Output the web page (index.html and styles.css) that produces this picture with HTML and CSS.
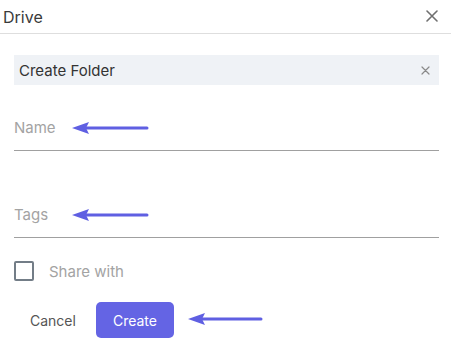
FILE: index.html
```html
<!DOCTYPE html>
<html lang="en">
<head>
  <meta charset="UTF-8" />
  <meta name="viewport" content="width=device-width, initial-scale=1.0"/>
  <title>Drive</title>
  <link rel="stylesheet" href="styles.css">
</head>
<body>
  <div class="dialog">
    <div class="header">
      <span class="title">Drive</span>
      <svg class="close" width="12" height="12" viewBox="0 0 12 12">
        <path d="M1 1L11 11M11 1L1 11" stroke="#6f6f6f" stroke-width="1.6" stroke-linecap="round"/>
      </svg>
    </div>

    <div class="content">
      <div class="chip">
        <span>Create Folder</span>
        <svg width="9" height="9" viewBox="0 0 9 9">
          <path d="M1 1L8 8M8 1L1 8" stroke="#8a8a8a" stroke-width="1.2" stroke-linecap="round"/>
        </svg>
      </div>

      <div class="field field-name">
        <span class="placeholder">Name</span>
        <svg class="arrow" width="78" height="14" viewBox="0 0 78 14">
          <path d="M12 7H75" stroke="#5f5fe2" stroke-width="3" stroke-linecap="round"/>
          <path d="M0 7L17 1L14 7L17 13Z" fill="#5f5fe2"/>
        </svg>
      </div>

      <div class="field field-tags">
        <span class="placeholder">Tags</span>
        <svg class="arrow" width="78" height="14" viewBox="0 0 78 14">
          <path d="M12 7H75" stroke="#5f5fe2" stroke-width="3" stroke-linecap="round"/>
          <path d="M0 7L17 1L14 7L17 13Z" fill="#5f5fe2"/>
        </svg>
      </div>

      <label class="share">
        <span class="box"></span>
        <span>Share with</span>
      </label>

      <div class="actions">
        <button class="btn-cancel">Cancel</button>
        <button class="btn-create">Create</button>
        <svg class="arrow-inline" width="76" height="14" viewBox="0 0 76 14">
          <path d="M12 7H73" stroke="#5f5fe2" stroke-width="3" stroke-linecap="round"/>
          <path d="M0 7L17 1L14 7L17 13Z" fill="#5f5fe2"/>
        </svg>
      </div>
    </div>
  </div>
</body>
</html>
```

FILE: styles.css
```css
body {
  margin: 0;
  font-family: 'Inter', 'Noto Sans', sans-serif;
  background: #fff;
  color: #333;
}
.dialog {
  width: 451px;
  height: 349px;
  background: white;
}
.header {
  display: flex;
  align-items: center;
  justify-content: space-between;
  height: 33px;
  padding: 0 13px 0 3px;
  border-bottom: 1px solid #dedede;
}
.title {
  font-size: 16px;
  color: #3a3a3a;
}
.close {
  margin-top: -1px;
}
.content {
  padding: 0 12px 0 14px;
}
.chip {
  display: flex;
  align-items: center;
  justify-content: space-between;
  height: 30px;
  margin-top: 21px;
  padding: 0 9px 0 5px;
  background: #eff2f6;
  font-size: 15px;
  color: #333;
}
.field {
  position: relative;
  display: flex;
  align-items: center;
  height: 45px;
  border-bottom: 1px solid #a0a0a0;
}
.field-name { margin-top: 20px; }
.field-tags { margin-top: 41px; }
.placeholder {
  font-size: 15px;
  color: #a3a3a3;
}
.arrow {
  position: absolute;
  left: 58px;
  top: 16px;
}
.share {
  display: flex;
  align-items: center;
  gap: 15px;
  margin-top: 23px;
  font-size: 15px;
  color: #a3a3a3;
}
.box {
  width: 16px;
  height: 16px;
  border: 2px solid #737d87;
  border-radius: 2px;
}
.actions {
  display: flex;
  align-items: center;
  margin-top: 21px;
}
button {
  font-family: inherit;
  font-size: 14px;
  border: none;
  cursor: pointer;
}
.btn-cancel {
  background: none;
  color: #555;
  padding: 0 16px;
  height: 36px;
}
.btn-create {
  margin-left: 4px;
  width: 78px;
  height: 36px;
  background: #6464e4;
  color: white;
  border-radius: 5px;
}
.arrow-inline {
  margin-left: 14px;
  margin-top: -2px;
}
```
